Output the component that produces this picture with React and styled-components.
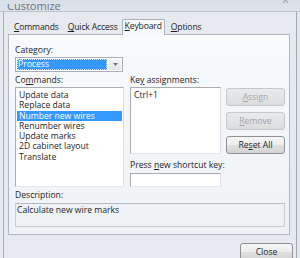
import React from 'react'
import styled, { createGlobalStyle } from 'styled-components'

const Global = createGlobalStyle`
  html, body { margin: 0; padding: 0; background: #e9edf1; }
  body { font-family: "Open Sans", "Noto Sans", sans-serif; font-size: 8.6px; color: #1e1e1e; }
`

const Window = styled.div`
  width: 300px;
  height: 258px;
  overflow: hidden;
  display: flex;
  flex-direction: column;
  background: #e4e9ee;
`

const TitleBar = styled.div`
  height: 11px;
  flex: none;
  display: flex;
  justify-content: space-between;
  align-items: flex-end;
  padding: 0 12px 0 7px;
  background: linear-gradient(#d9dfe6, #dde3e9);
  border-bottom: 1px solid #b9c1ca;
  overflow: hidden;
`

const Title = styled.div`
  font-size: 11px;
  line-height: 11px;
  height: 7px;
  overflow: hidden;
  color: #6b7480;
  display: flex;
  align-items: flex-end;
`

const CloseGlyph = styled.div`
  font-size: 9px;
  line-height: 9px;
  height: 4px;
  overflow: hidden;
  margin-bottom: 7px;
  color: #8a929c;
  display: flex;
  align-items: flex-end;
`

const Client = styled.div`
  flex: 1;
  margin: 0 3px;
  border-left: 1px solid #a3abb4;
  border-right: 1px solid #a3abb4;
  background: #e6eaef;
  display: flex;
  flex-direction: column;
`

const Tabs = styled.div`
  display: flex;
  align-items: flex-end;
  height: 15px;
  margin-top: 7px;
  padding-left: 5px;
`

const Tab = styled.div`
  height: 13px;
  line-height: 13px;
  padding: 0 ${p => p.$pad ?? 5}px;
  box-sizing: border-box;
  letter-spacing: -0.15px;
  color: #1e1e1e;
  ${p => p.$active && `
    background: #f6f8fa;
    border: 1px solid #a9b3bd;
    border-bottom: none;
    border-radius: 2px 2px 0 0;
    position: relative;
    z-index: 1;
    margin-bottom: -1px;
    height: 16px;
  `}
`

const Panel = styled.div`
  width: 282px;
  height: 201px;
  margin-left: 4px;
  box-sizing: border-box;
  border: 1px solid #aeb8c2;
  background: linear-gradient(#f8fafb, #eef2f5);
  padding: 9px 4px 0 6px;
  display: flex;
  flex-direction: column;
`

const Label = styled.div`
  height: 12px;
  line-height: 12px;
  margin-top: ${p => p.$mt || 0}px;
  white-space: nowrap;
`

const U = styled.span`
  text-decoration: underline;
  text-underline-offset: 1px;
`

const Combo = styled.div`
  margin-top: 1px;
  width: 108px;
  height: 15px;
  box-sizing: border-box;
  border: 1px solid #abadb3;
  background: #fff;
  display: flex;
  padding: 1px;
`

const ComboValue = styled.div`
  flex: 1;
  background: #3399ff;
  color: #fff;
  line-height: 11px;
  padding-left: 1px;
  outline: 1px dotted #cfe5ff;
  outline-offset: -1px;
`

const ComboArrow = styled.div`
  width: 12px;
  margin-left: 2px;
  display: flex;
  align-items: center;
  justify-content: center;
  background: linear-gradient(#f4f5f6, #e2e5e8);
`

const Columns = styled.div`
  display: flex;
  margin-top: 2px;
`

const Column = styled.div`
  width: ${p => p.$w}px;
  margin-right: ${p => p.$mr || 0}px;
  display: flex;
  flex-direction: column;
`

const ListBox = styled.div`
  margin-top: ${p => p.$mt ?? 1}px;
  height: ${p => p.$h}px;
  box-sizing: border-box;
  border: 1px solid #abadb3;
  border-right-color: #dbdfe6;
  border-bottom-color: #e3e9ef;
  background: #fff;
  padding: 2px 1px;
`

const Item = styled.div`
  height: 10.3px;
  line-height: 10.3px;
  padding-left: 2px;
  white-space: nowrap;
  background: ${p => (p.$sel ? '#3399ff' : 'transparent')};
  color: ${p => (p.$sel ? '#fff' : '#1e1e1e')};
`

const Buttons = styled.div`
  display: flex;
  flex-direction: column;
  gap: 6px;
  padding-top: 14px;
`

const Button = styled.div`
  width: ${p => p.$w || 59}px;
  height: 18px;
  box-sizing: border-box;
  border-radius: 3px;
  text-align: center;
  line-height: 16px;
  border: 1px solid ${p => (p.$disabled ? '#c4c8cc' : '#8e9297')};
  background: ${p => (p.$disabled
    ? 'linear-gradient(#e9eaeb, #dcdddf)'
    : 'linear-gradient(#f6f6f6 0%, #ececec 50%, #dfdfdf 51%, #d3d3d3 100%)')};
  color: ${p => (p.$disabled ? '#a4a7aa' : '#1e1e1e')};
`

const DescBox = styled.div`
  margin-top: 2px;
  width: 270px;
  height: 24px;
  box-sizing: border-box;
  border: 1px solid #c8ced5;
  border-top-color: #b4bcc5;
  background: #eef2f5;
  padding: 1px 1px;
  line-height: 11px;
`

const Footer = styled.div`
  display: flex;
  justify-content: flex-end;
  padding: 8px 3px 0 0;
`

const commands = [
  'Update data',
  'Replace data',
  'Number new wires',
  'Renumber wires',
  'Update marks',
  '2D cabinet layout',
  'Translate',
]

export default function App() {
  return (
    <>
      <Global />
      <Window>
        <TitleBar>
          <Title>Customize</Title>
          <CloseGlyph>X</CloseGlyph>
        </TitleBar>
        <Client>
          <Tabs>
            <Tab><U>C</U>ommands</Tab>
            <Tab $pad={4}><U>Q</U>uick Access</Tab>
            <Tab $active $pad={2}><U>K</U>eyboard</Tab>
            <Tab $pad={6}><U>O</U>ptions</Tab>
          </Tabs>
          <Panel>
            <Label>Category:</Label>
            <Combo>
              <ComboValue>Process</ComboValue>
              <ComboArrow>
                <svg width="5" height="3" viewBox="0 0 5 3"><path d="M0 0h5L2.5 3z" fill="#6d7178" /></svg>
              </ComboArrow>
            </Combo>
            <Columns>
              <Column $w={110} $mr={6}>
                <Label>Co<U>m</U>mands:</Label>
                <ListBox $h={100}>
                  {commands.map(c => (
                    <Item key={c} $sel={c === 'Number new wires'}>{c}</Item>
                  ))}
                </ListBox>
              </Column>
              <Column $w={91} $mr={5}>
                <Label>Ke<U>y</U> assignments:</Label>
                <ListBox $h={67}>
                  <Item>Ctrl+1</Item>
                </ListBox>
                <Label $mt={5}>Press <U>n</U>ew shortcut key:</Label>
                <ListBox $h={14} $mt={2} />
              </Column>
              <Buttons>
                <Button $disabled><U>A</U>ssign</Button>
                <Button $disabled><U>R</U>emove</Button>
                <Button>Re<U>s</U>et All</Button>
              </Buttons>
            </Columns>
            <Label $mt={2}>Description:</Label>
            <DescBox>Calculate new wire marks</DescBox>
          </Panel>
          <Footer>
            <Button $w={53}>Close</Button>
          </Footer>
        </Client>
      </Window>
    </>
  )
}
